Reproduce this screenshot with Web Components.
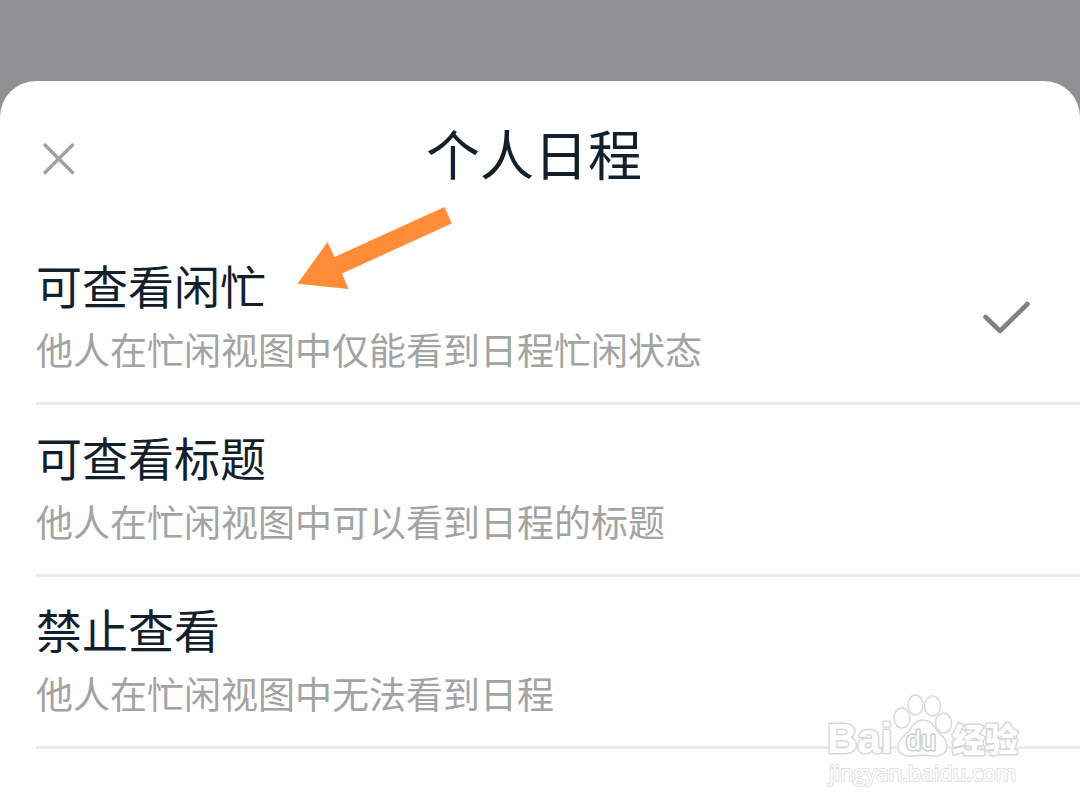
<!DOCTYPE html>
<html lang="zh-CN">
<head>
<meta charset="UTF-8">
<meta name="viewport" content="width=device-width, initial-scale=1">
<title>个人日程</title>
<style>
  html {
    height: 100%;
    background: #8f9092;
  }

  body {
    margin: 0;
    min-height: 100%;
    display: flex;
    flex-direction: column;
    font-family: "Noto Sans CJK SC", sans-serif;
    color: #13202c;
  }
</style>
</head>
<body>
<schedule-sheet heading="个人日程">
  <visibility-option value="busy" label="可查看闲忙" description="他人在忙闲视图中仅能看到日程忙闲状态" checked></visibility-option>
  <visibility-option value="title" label="可查看标题" description="他人在忙闲视图中可以看到日程的标题"></visibility-option>
  <visibility-option value="none" label="禁止查看" description="他人在忙闲视图中无法看到日程"></visibility-option>
  <pointer-arrow slot="overlay"></pointer-arrow>
  <site-watermark slot="overlay"></site-watermark>
</schedule-sheet>

<script>
// Bottom sheet with a close button, a heading and a list of options
class ScheduleSheet extends HTMLElement {
  constructor() {
    super();
    this.attachShadow({ mode: 'open' });
  }

  connectedCallback() {
    this.shadowRoot.innerHTML = `
      <style>
        :host {
          flex: 1;
          display: flex;
          flex-direction: column;
          position: relative;
          margin-top: 81px;
          border-radius: 36px 36px 0 0;
          background: #fefefe;
        }

        header {
          display: grid;
          grid-template-columns: 44px 1fr 56px;
          align-items: center;
          height: 152px;
          padding: 0 36px;
        }

        h1 {
          margin: 0;
          padding-bottom: 8px;
          font-size: 54px;
          line-height: 64px;
          font-weight: 400;
          text-align: center;
        }

        button {
          display: flex;
          align-items: center;
          justify-content: center;
          width: 44px;
          height: 44px;
          padding: 0;
          border: 0;
          background: none;
          color: #9da1a6;
          cursor: pointer;
        }
      </style>

      <header>
        <button type="button" aria-label="关闭">
          <svg width="36" height="36" viewBox="0 0 36 36" fill="none" stroke="currentColor" stroke-width="3.4" stroke-linecap="round">
            <path d="M5 6 32.500 33.500M32.500 6 5 33.500"/>
          </svg>
        </button>
        <h1></h1>
      </header>
      <main role="radiogroup"><slot></slot></main>
      <slot name="overlay"></slot>
    `;
    const heading = this.getAttribute('heading');
    this.shadowRoot.querySelector('h1').textContent = heading;
    this.shadowRoot.querySelector('main').setAttribute('aria-label', heading);
    this.setupEventListeners();
  }

  setupEventListeners() {
    this.shadowRoot.querySelector('button').addEventListener('click', () => {
      this.dispatchEvent(new Event('close'));
    });

    // Radios live in separate shadow roots, so clear the others here
    this.addEventListener('option-selected', (event) => {
      this.querySelectorAll('visibility-option').forEach((option) => {
        option.checked = option === event.target;
      });
    });
  }
}

// One row: label, description and a tick when selected
class VisibilityOption extends HTMLElement {
  constructor() {
    super();
    this.attachShadow({ mode: 'open' });
  }

  connectedCallback() {
    this.shadowRoot.innerHTML = `
      <style>
        :host {
          display: block;
          margin-left: 36px;
          border-bottom: 3px solid #ebebeb;
        }

        .row {
          display: grid;
          grid-template-columns: 1fr 48px;
          align-items: center;
          padding: 19px 50px 20px 0;
          cursor: pointer;
        }

        .label,
        .description {
          display: block;
        }

        .label {
          font-size: 46px;
          line-height: 64px;
        }

        .description {
          font-size: 37px;
          line-height: 66px;
          color: #a3a3a3;
        }

        .tick {
          display: grid;
          align-items: center;
        }

        .tick > * {
          grid-area: 1 / 1;
        }

        input {
          appearance: none;
          width: 48px;
          height: 40px;
          margin: 0;
          cursor: pointer;
        }

        svg {
          visibility: hidden;
          pointer-events: none;
        }

        input:checked + svg {
          visibility: visible;
        }
      </style>

      <label class="row" for="choice">
        <span>
          <span class="label"></span>
          <span class="description"></span>
        </span>
        <span class="tick">
          <input type="radio" id="choice" name="visibility">
          <svg width="48" height="40" viewBox="0 0 48 40" fill="none" stroke="#7d8087" stroke-width="4.600" stroke-linecap="round" stroke-linejoin="round">
            <path d="M3.500 20 18 34 45.500 7"/>
          </svg>
        </span>
      </label>
    `;
    this.shadowRoot.querySelector('.label').textContent = this.getAttribute('label');
    this.shadowRoot.querySelector('.description').textContent = this.getAttribute('description');

    const input = this.shadowRoot.querySelector('input');
    input.value = this.getAttribute('value');
    input.checked = this.hasAttribute('checked');
    input.addEventListener('change', () => {
      this.dispatchEvent(new CustomEvent('option-selected', { bubbles: true }));
    });
  }

  set checked(value) {
    this.shadowRoot.querySelector('input').checked = value;
  }
}

// Orange arrow pointing at the first option
class PointerArrow extends HTMLElement {
  constructor() {
    super();
    this.attachShadow({ mode: 'open' });
    this.shadowRoot.innerHTML = `
      <style>
        :host {
          position: absolute;
          left: 296px;
          top: 124px;
          pointer-events: none;
        }

        svg {
          display: block;
        }
      </style>
      <svg width="158" height="86" viewBox="0 0 158 86" aria-hidden="true">
        <path fill="#ff8c37" d="M1.500 78.700 31.500 37 38.500 52 148.500 2 155.800 18.500 46 68.500 52.500 84Z"/>
      </svg>
    `;
  }
}

// White outlined logo in the bottom right corner
class SiteWatermark extends HTMLElement {
  constructor() {
    super();
    this.attachShadow({ mode: 'open' });
    this.shadowRoot.innerHTML = `
      <style>
        :host {
          position: absolute;
          right: 50px;
          bottom: 16px;
          pointer-events: none;
        }

        svg {
          display: block;
        }

        text {
          paint-order: stroke;
          stroke-linejoin: round;
        }

        .logo {
          font-family: "Liberation Sans", Arial, sans-serif;
        }

        .cjk {
          font-family: "Noto Sans CJK SC", sans-serif;
        }

        .site {
          font-family: "Open Sans", "Noto Sans", sans-serif;
        }
      </style>
      <svg width="210" height="104" viewBox="0 0 210 104" fill="#fefefe" stroke="#d9d9d9" stroke-width="1.500">
        <text class="logo" x="7" y="63" font-size="42" font-weight="700" stroke-width="3">Bai</text>
        <ellipse cx="82" cy="28" rx="8" ry="10"/>
        <ellipse cx="95.500" cy="15" rx="7.500" ry="10"/>
        <ellipse cx="112.500" cy="16" rx="8" ry="10"/>
        <ellipse cx="123.500" cy="33" rx="8" ry="10"/>
        <path d="M102.500 30C111 30 115 37 118 42C122 46 127 49 127 56C127 63 121 67 114 66C106 65 100 65 92 66C84 67 78 63 78 57C78 50 83 47 88 42C92 37 95 30 102.500 30Z"/>
        <text class="logo" x="86" y="60" font-size="27" stroke-width="3" stroke="#cdcdcd">du</text>
        <text class="cjk" x="132" y="62" font-size="33" font-weight="900" stroke-width="3">经验</text>
        <text class="site" x="9" y="91" font-size="22" font-weight="500" stroke="#e2e2e2" stroke-width="2">jingyan.baidu.com</text>
      </svg>
    `;
  }
}

customElements.define('schedule-sheet', ScheduleSheet);
customElements.define('visibility-option', VisibilityOption);
customElements.define('pointer-arrow', PointerArrow);
customElements.define('site-watermark', SiteWatermark);
</script>
</body>
</html>
